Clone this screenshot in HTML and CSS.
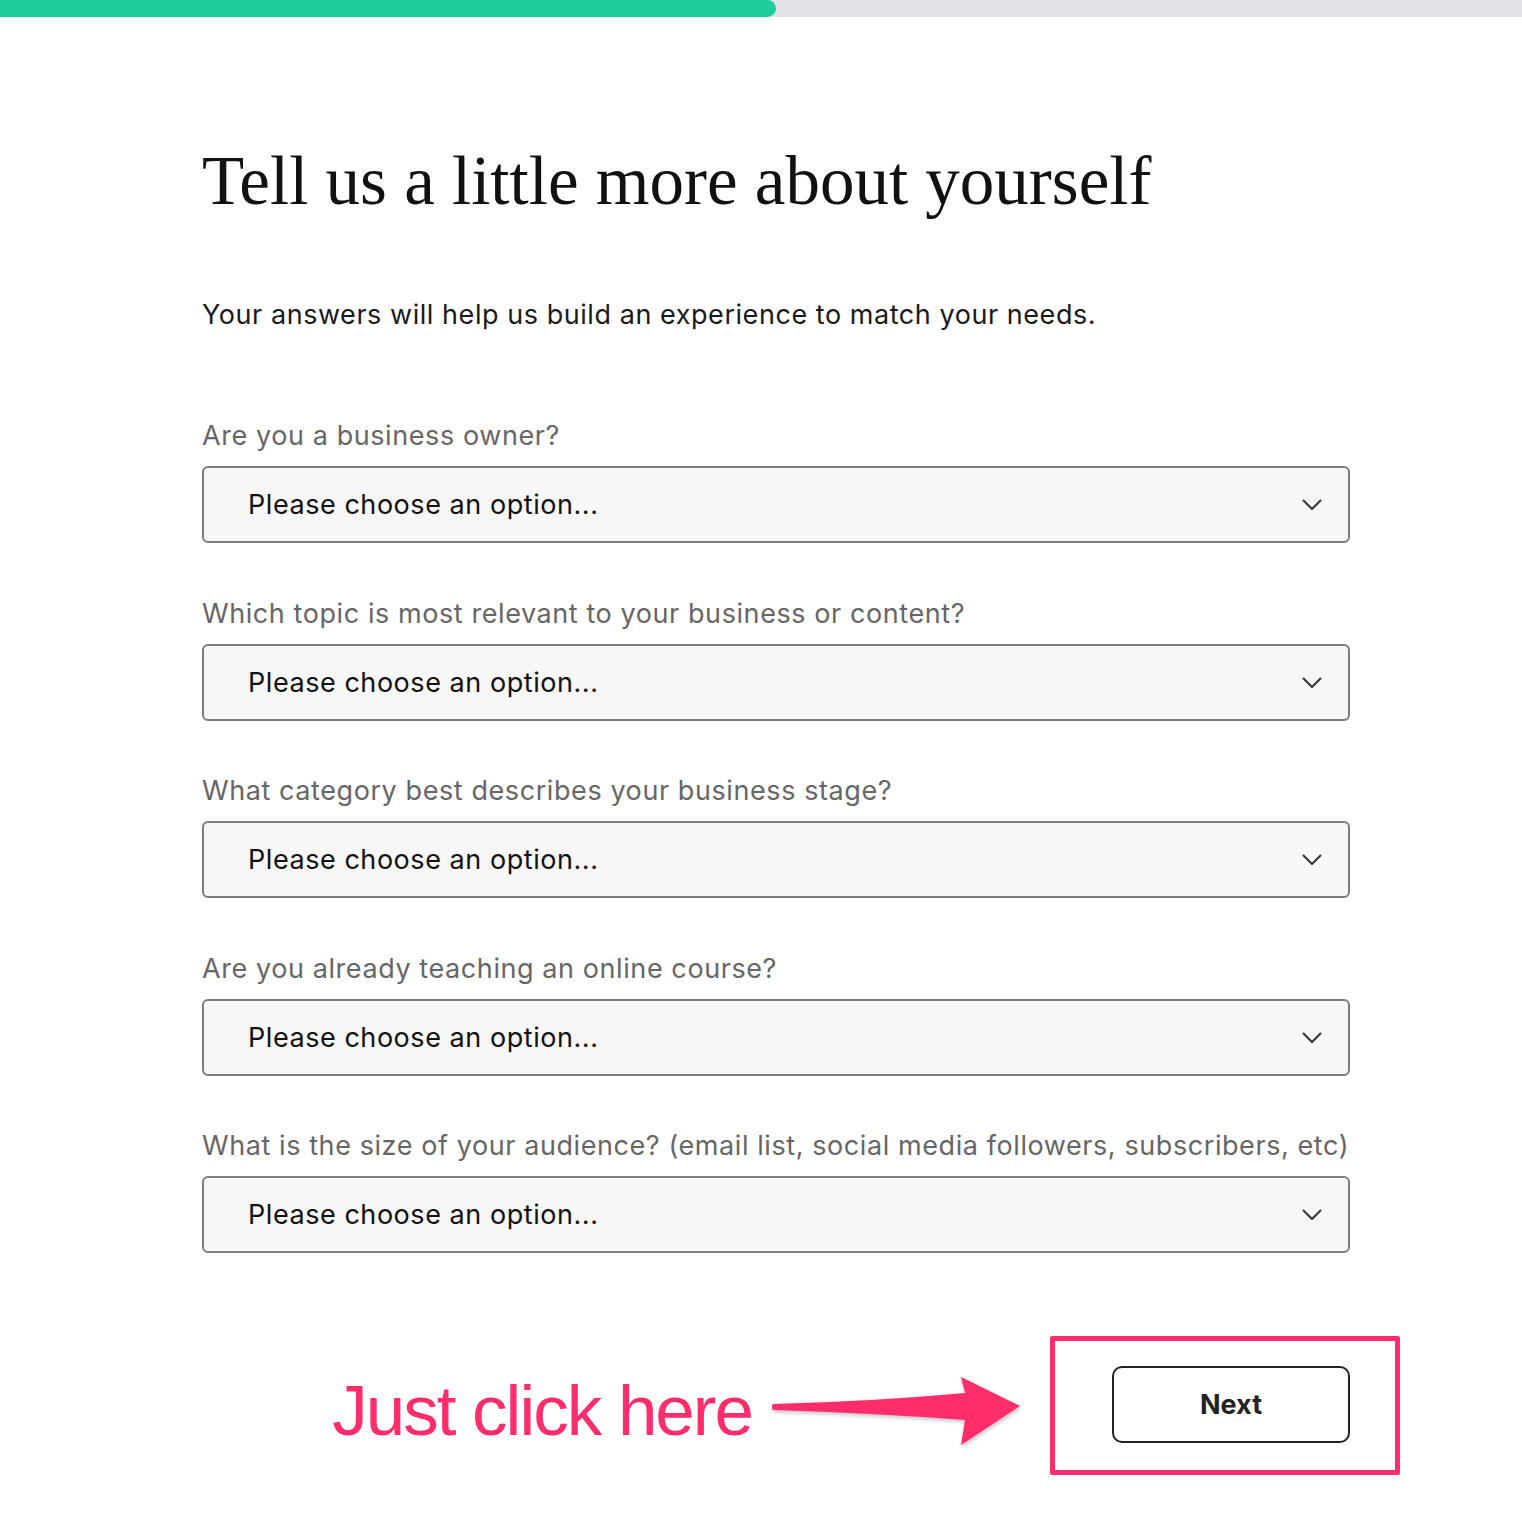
FILE: index.html
```html
<!DOCTYPE html>
<html lang="en">
<head>
    <meta charset="UTF-8">
    <meta name="viewport" content="width=device-width, initial-scale=1.0">
    <title>Tell us a little more about yourself</title>
    <link rel="stylesheet" href="styles.css">
</head>
<body>
    <!-- Progress bar -->
    <div class="progress">
        <div class="progress-fill"></div>
    </div>

    <div class="page">
        <h1 class="title">Tell us a little more about yourself</h1>
        <p class="intro">Your answers will help us build an experience to match your needs.</p>

        <form class="survey">
            <div class="field">
                <label for="owner">Are you a business owner?</label>
                <div class="select-wrap">
                    <select id="owner">
                        <option value="" selected>Please choose an option...</option>
                        <option>Yes</option>
                        <option>No</option>
                    </select>
                    <svg class="chevron" width="20" height="12" viewBox="0 0 20 12"><polyline points="1.5,1.5 10,10 18.5,1.5"/></svg>
                </div>
            </div>

            <div class="field">
                <label for="topic">Which topic is most relevant to your business or content?</label>
                <div class="select-wrap">
                    <select id="topic">
                        <option value="" selected>Please choose an option...</option>
                    </select>
                    <svg class="chevron" width="20" height="12" viewBox="0 0 20 12"><polyline points="1.5,1.5 10,10 18.5,1.5"/></svg>
                </div>
            </div>

            <div class="field">
                <label for="stage">What category best describes your business stage?</label>
                <div class="select-wrap">
                    <select id="stage">
                        <option value="" selected>Please choose an option...</option>
                    </select>
                    <svg class="chevron" width="20" height="12" viewBox="0 0 20 12"><polyline points="1.5,1.5 10,10 18.5,1.5"/></svg>
                </div>
            </div>

            <div class="field">
                <label for="teaching">Are you already teaching an online course?</label>
                <div class="select-wrap">
                    <select id="teaching">
                        <option value="" selected>Please choose an option...</option>
                    </select>
                    <svg class="chevron" width="20" height="12" viewBox="0 0 20 12"><polyline points="1.5,1.5 10,10 18.5,1.5"/></svg>
                </div>
            </div>

            <div class="field">
                <label for="audience">What is the size of your audience? (email list, social media followers, subscribers, etc)</label>
                <div class="select-wrap">
                    <select id="audience">
                        <option value="" selected>Please choose an option...</option>
                    </select>
                    <svg class="chevron" width="20" height="12" viewBox="0 0 20 12"><polyline points="1.5,1.5 10,10 18.5,1.5"/></svg>
                </div>
            </div>
        </form>

        <!-- Annotation + next button -->
        <div class="footer">
            <span class="hint">Just click here</span>
            <svg class="arrow" width="250" height="76" viewBox="0 0 250 76">
                <path d="M1,31 Q100,28.5 193,20 L189,4 L248,33 L189,72 L193,47 Q100,40 1,37 Q-1.5,34 1,31 Z"/>
            </svg>
            <div class="highlight">
                <button type="button" class="next-button">Next</button>
            </div>
        </div>
    </div>
</body>
</html>
```

FILE: styles.css
```css
body {
    margin: 0;
    background-color: #ffffff;
    font-family: 'Inter', 'Liberation Sans', sans-serif;
}

/* Top progress bar */
.progress {
    height: 17px;
    background-color: #e1e2e6;
}
.progress-fill {
    width: 776px;
    height: 100%;
    background-color: #20cc9c;
    border-radius: 0 9px 9px 0;
}

.page {
    width: 1148px;
    padding-left: 202px;
}

.title {
    margin: 124px 0 0;
    font-family: 'Liberation Serif', 'Times New Roman', serif;
    font-weight: normal;
    font-size: 69px;
    line-height: 80px;
    color: #111111;
}

.intro {
    margin: 76px 0 0;
    font-size: 27px;
    line-height: 36px;
    letter-spacing: 0.55px;
    color: #1a1a1a;
}

.survey {
    margin-top: 85px;
}
.field {
    margin-bottom: 52.5px;
}
.field:last-child {
    margin-bottom: 0;
}
.field label {
    display: block;
    font-size: 27px;
    line-height: 36px;
    letter-spacing: 0.58px;
    color: #666666;
    margin-bottom: 12px;
}

.select-wrap {
    position: relative;
}
.select-wrap select {
    appearance: none;
    -webkit-appearance: none;
    display: block;
    width: 100%;
    height: 77px;
    padding: 0 70px 0 44px;
    background-color: #f7f7f7;
    border: 2px solid #7d7d7d;
    border-radius: 6px;
    font-family: 'Inter', 'Liberation Sans', sans-serif;
    font-size: 27px;
    letter-spacing: 0.55px;
    color: #111111;
}
/* chevron sits over the select */
.chevron {
    position: absolute;
    right: 28px;
    top: 33px;
    pointer-events: none;
    fill: none;
    stroke: #333333;
    stroke-width: 2;
    stroke-linecap: round;
    stroke-linejoin: round;
}

.footer {
    display: flex;
    justify-content: flex-end;
    align-items: center;
    margin: 83px -50px 0 0;
}
.hint {
    font-family: 'Liberation Sans', Arial, sans-serif;
    font-size: 71px;
    line-height: 80px;
    letter-spacing: -2px;
    color: #ff2d6c;
    margin-top: 10px;
    margin-right: 20px;
}
.arrow {
    margin: 10px 28px 0 0;
    fill: #ff2d6c;
    filter: drop-shadow(1px 2px 2px rgba(0, 0, 0, 0.25));
}
.highlight {
    width: 350px;
    height: 139px;
    box-sizing: border-box;
    border: 5px solid #ff2d6c;
    border-radius: 2px;
    padding: 25px 45px 0 57px;
}
.next-button {
    width: 238px;
    height: 77px;
    background-color: #ffffff;
    border: 2px solid #222222;
    border-radius: 10px;
    font-family: 'Inter', 'Liberation Sans', sans-serif;
    font-size: 27px;
    font-weight: bold;
    color: #222222;
    cursor: pointer;
}
```
